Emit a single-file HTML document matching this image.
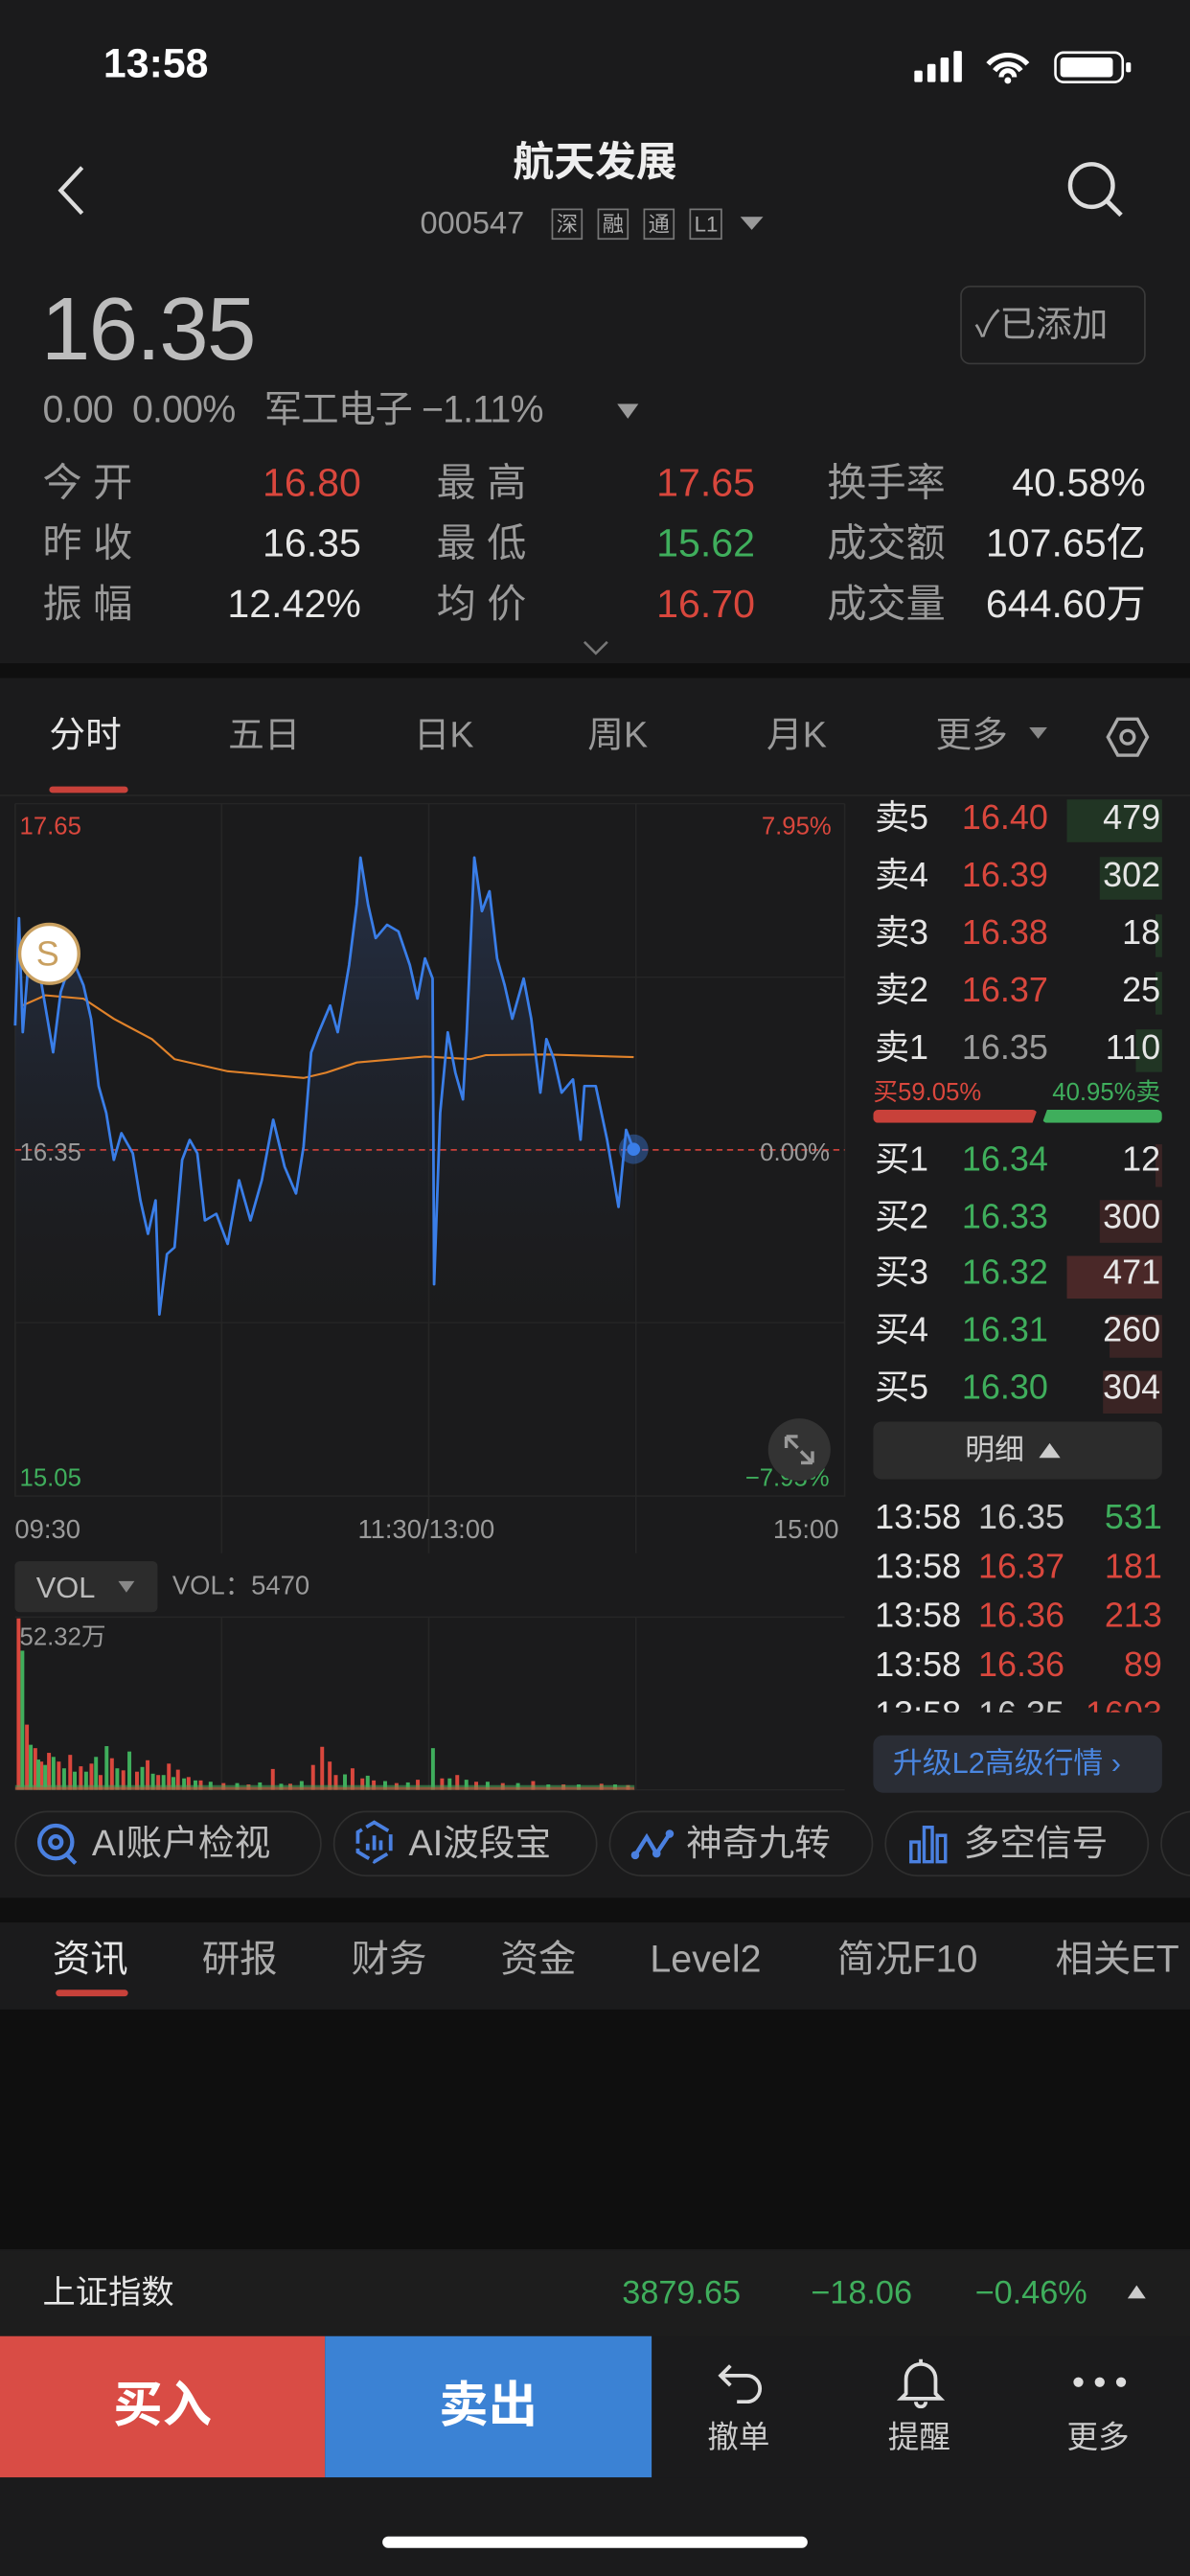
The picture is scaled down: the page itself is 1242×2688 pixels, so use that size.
<!DOCTYPE html>
<html><head><meta charset="utf-8">
<style>
*{margin:0;padding:0;box-sizing:border-box}
html,body{width:1242px;height:2688px;background:#1b1b1c;overflow:hidden}
#w{position:absolute;left:0;top:0;width:725px;height:1569px;transform:scale(1.71310);transform-origin:0 0;background:#1b1b1c;font-family:"Liberation Sans","Noto Sans CJK SC",sans-serif;color:#ddd}
.a{position:absolute;white-space:nowrap;line-height:1}
.g{color:#9a9a9a}.r{color:#d9473d}.gr{color:#3fae5c}.w{color:#e6e6e6}
.ob{position:absolute;height:26px}
.st{font-size:24px}
</style></head><body><div id="w">
<!-- status -->
<div class="a" style="left:63px;top:27px;font-size:25px;font-weight:bold;color:#fff">13:58</div>
<svg class="a" style="left:557px;top:30px" width="135" height="22"><rect x="0" y="13" width="5" height="7" rx="1" fill="#fff"/><rect x="8" y="9" width="5" height="11" rx="1" fill="#fff"/><rect x="16" y="5" width="5" height="15" rx="1" fill="#fff"/><rect x="24" y="1" width="5" height="19" rx="1" fill="#fff"/>
<path d="M45 9a16 16 0 0 1 24 0M49 13a10 10 0 0 1 16 0M53 17a4 4 0 0 1 8 0" stroke="#fff" stroke-width="3" fill="none"/><circle cx="57" cy="19" r="2" fill="#fff"/>
<rect x="86" y="2" width="41" height="18" rx="5" stroke="#fff" stroke-width="1.5" fill="none"/><rect x="89" y="5" width="32" height="12" rx="2" fill="#fff"/><rect x="129" y="8" width="3" height="6" rx="1" fill="#fff"/></svg>
<!-- nav -->
<svg class="a" style="left:33px;top:100px" width="20" height="32"><path d="M17 2L4 16l13 14" stroke="#ddd" stroke-width="2.5" fill="none"/></svg>
<div class="a" style="left:0;width:725px;text-align:center;top:87px;font-size:25px;font-weight:bold;color:#eee">航天发展</div>
<div class="a g" style="left:256px;top:127px;font-size:19px">000547</div>
<div class="a" style="left:336px;top:127px;font-size:13px;color:#aaa;border:1px solid #777;padding:2px 2px">深</div>
<div class="a" style="left:364px;top:127px;font-size:13px;color:#aaa;border:1px solid #777;padding:2px 2px">融</div>
<div class="a" style="left:392px;top:127px;font-size:13px;color:#aaa;border:1px solid #777;padding:2px 2px">通</div>
<div class="a" style="left:420px;top:127px;font-size:13px;color:#aaa;border:1px solid #777;padding:2px 2px">L1</div>
<svg class="a" style="left:451px;top:132px" width="15" height="10"><path d="M0 0h14L7 8z" fill="#999"/></svg>
<svg class="a" style="left:648px;top:96px" width="40" height="40"><circle cx="17" cy="17" r="13" stroke="#ddd" stroke-width="2.6" fill="none"/><path d="M26 26l9 9" stroke="#ddd" stroke-width="2.8"/></svg>
<!-- price -->
<div class="a" style="left:25px;top:174px;font-size:54px;color:#bdbdbd;letter-spacing:-1px">16.35</div>
<div class="a" style="left:585px;top:174px;width:113px;height:48px;border:1.5px solid #3a3a3a;border-radius:6px"></div>
<div class="a g" style="left:594px;top:187px;font-size:22px">✓已添加</div>
<div class="a g" style="left:26px;top:238px;font-size:23px;letter-spacing:-0.5px">0.00&nbsp; 0.00%&nbsp;&nbsp; 军工电子 −1.11%</div>
<svg class="a" style="left:376px;top:246px" width="14" height="10"><path d="M0 0h13L6.5 9z" fill="#999"/></svg>
<!-- stats -->
<div class="st">
<div class="a g" style="left:26px;top:283px">今 开</div><div class="a r" style="left:0;width:220px;text-align:right;top:283px">16.80</div>
<div class="a g" style="left:266px;top:283px">最 高</div><div class="a r" style="left:0;width:460px;text-align:right;top:283px">17.65</div>
<div class="a g" style="left:504px;top:283px">换手率</div><div class="a w" style="left:0;width:698px;text-align:right;top:283px">40.58%</div>
<div class="a g" style="left:26px;top:320px">昨 收</div><div class="a w" style="left:0;width:220px;text-align:right;top:320px">16.35</div>
<div class="a g" style="left:266px;top:320px">最 低</div><div class="a gr" style="left:0;width:460px;text-align:right;top:320px">15.62</div>
<div class="a g" style="left:504px;top:320px">成交额</div><div class="a w" style="left:0;width:698px;text-align:right;top:320px">107.65亿</div>
<div class="a g" style="left:26px;top:357px">振 幅</div><div class="a w" style="left:0;width:220px;text-align:right;top:357px">12.42%</div>
<div class="a g" style="left:266px;top:357px">均 价</div><div class="a r" style="left:0;width:460px;text-align:right;top:357px">16.70</div>
<div class="a g" style="left:504px;top:357px">成交量</div><div class="a w" style="left:0;width:698px;text-align:right;top:357px">644.60万</div>
</div>
<svg class="a" style="left:355px;top:390px" width="16" height="10"><path d="M1 1l7 7 7-7" stroke="#777" stroke-width="1.5" fill="none"/></svg>
<div class="a" style="left:0;top:404px;width:725px;height:9px;background:#0f0f0f"></div>
<!-- tabs -->
<div style="font-size:22px">
<div class="a w" style="left:30px;top:437px">分时</div>
<div class="a g" style="left:139px;top:437px">五日</div>
<div class="a g" style="left:252px;top:437px">日K</div>
<div class="a g" style="left:358px;top:437px">周K</div>
<div class="a g" style="left:467px;top:437px">月K</div>
<div class="a g" style="left:570px;top:437px">更多</div>
</div>
<svg class="a" style="left:627px;top:443px" width="12" height="8"><path d="M0 0h11L5.5 7z" fill="#888"/></svg>
<svg class="a" style="left:673px;top:435px" width="28" height="28"><path d="M8 3h12l6 11-6 11H8L2 14z" stroke="#aaa" stroke-width="2" fill="none"/><circle cx="14" cy="14" r="4" stroke="#aaa" stroke-width="2" fill="none"/></svg>
<div class="a" style="left:30px;top:479px;width:48px;height:4px;background:#c8413a;border-radius:2px"></div>
<div class="a" style="left:0;top:484px;width:725px;height:1px;background:#262626"></div>
<!-- chart svg (zoom coords, non-uniform) -->
<svg class="a" style="left:0;top:465px" width="725" height="642" viewBox="0 0 1568 1568" preserveAspectRatio="none">
<defs><linearGradient id="fg" x1="0" y1="0" x2="0" y2="1"><stop offset="0" stop-color="#2a3a5a" stop-opacity=".7"/><stop offset="1" stop-color="#1b1b1c" stop-opacity=".2"/></linearGradient></defs>
<g stroke="#262626" stroke-width="2" fill="none" vector-effect="non-scaling-stroke"><path d="M20 60H1113M20 318H1113M20 832H1113M20 1090H1113M20 60V1090H1113V60M292 60V1175M565 60V1175M838 60V1175M20 1270H1113M565 1270V1527M838 1270V1527M292 1270V1527M20 1527H1113"/></g>
<polygon fill="url(#fg)" points="20,390 25,230 30,400 40,260 55,330 70,430 80,340 95,290 110,330 120,380 130,480 140,520 150,590 160,550 175,580 185,650 195,700 205,650 210,820 220,730 230,720 240,590 250,560 260,580 270,680 285,670 300,715 315,620 330,680 345,620 360,530 375,600 390,640 400,570 410,430 420,400 435,360 445,400 460,300 470,210 475,140 485,210 495,260 510,240 525,250 540,300 550,350 560,290 570,320 572,775 580,520 590,400 600,460 610,500 615,400 625,140 635,220 645,190 655,290 665,330 675,380 690,320 700,380 712,490 720,410 730,440 740,490 755,470 765,560 770,480 785,480 800,560 815,660 825,545 835,575 835,832 20,832"/>
<path d="M20 575H1113" stroke="#c8413a" stroke-width="2.5" stroke-dasharray="8 6"/>
<polyline fill="none" stroke="#e0822a" stroke-width="3" points="30,360 60,345 110,350 150,380 200,410 230,440 300,458 400,468 430,460 470,445 560,436 620,440 640,434 720,433 835,437"/>
<polyline fill="none" stroke="#3a7ee8" stroke-width="3.5" stroke-linejoin="round" points="20,390 25,230 30,400 40,260 55,330 70,430 80,340 95,290 110,330 120,380 130,480 140,520 150,590 160,550 175,580 185,650 195,700 205,650 210,820 220,730 230,720 240,590 250,560 260,580 270,680 285,670 300,715 315,620 330,680 345,620 360,530 375,600 390,640 400,570 410,430 420,400 435,360 445,400 460,300 470,210 475,140 485,210 495,260 510,240 525,250 540,300 550,350 560,290 570,320 572,775 580,520 590,400 600,460 610,500 615,400 625,140 635,220 645,190 655,290 665,330 675,380 690,320 700,380 712,490 720,410 730,440 740,490 755,470 765,560 770,480 785,480 800,560 815,660 825,545 835,575"/>
<g fill="#d9473d">
<rect x="22" y="1272" width="5" height="255"/><rect x="33" y="1430" width="5" height="97"/><rect x="44" y="1465" width="5" height="62"/><rect x="52" y="1485" width="5" height="42"/><rect x="62" y="1472" width="5" height="55"/><rect x="75" y="1485" width="5" height="42"/><rect x="90" y="1475" width="5" height="52"/><rect x="104" y="1492" width="5" height="35"/><rect x="118" y="1488" width="5" height="39"/><rect x="130" y="1505" width="5" height="22"/><rect x="145" y="1480" width="5" height="47"/><rect x="160" y="1498" width="5" height="29"/><rect x="178" y="1500" width="5" height="27"/><rect x="192" y="1483" width="5" height="44"/><rect x="206" y="1505" width="5" height="22"/><rect x="220" y="1488" width="5" height="39"/><rect x="232" y="1497" width="5" height="30"/><rect x="246" y="1508" width="5" height="19"/><rect x="262" y="1513" width="5" height="14"/><rect x="292" y="1517" width="5" height="10"/><rect x="325" y="1519" width="5" height="8"/><rect x="357" y="1496" width="5" height="31"/><rect x="380" y="1518" width="5" height="9"/><rect x="410" y="1490" width="5" height="37"/><rect x="422" y="1463" width="5" height="64"/><rect x="432" y="1485" width="5" height="42"/><rect x="440" y="1505" width="5" height="22"/><rect x="462" y="1495" width="5" height="32"/><rect x="475" y="1510" width="5" height="17"/><rect x="490" y="1513" width="5" height="14"/><rect x="520" y="1517" width="5" height="10"/><rect x="548" y="1512" width="5" height="15"/><rect x="580" y="1510" width="5" height="17"/><rect x="600" y="1505" width="5" height="22"/><rect x="625" y="1515" width="5" height="12"/><rect x="660" y="1517" width="5" height="10"/><rect x="700" y="1514" width="5" height="13"/><rect x="740" y="1519" width="5" height="8"/><rect x="790" y="1518" width="5" height="9"/><rect x="825" y="1520" width="5" height="7"/></g>
<g fill="#3fae5c">
<rect x="27" y="1320" width="5" height="207"/><rect x="38" y="1460" width="5" height="67"/><rect x="48" y="1482" width="5" height="45"/><rect x="57" y="1490" width="5" height="37"/><rect x="68" y="1478" width="5" height="49"/><rect x="82" y="1495" width="5" height="32"/><rect x="96" y="1500" width="5" height="27"/><rect x="111" y="1500" width="5" height="27"/><rect x="124" y="1478" width="5" height="49"/><rect x="138" y="1462" width="5" height="65"/><rect x="152" y="1495" width="5" height="32"/><rect x="168" y="1470" width="5" height="57"/><rect x="185" y="1493" width="5" height="34"/><rect x="199" y="1503" width="5" height="24"/><rect x="213" y="1505" width="5" height="22"/><rect x="226" y="1508" width="5" height="19"/><rect x="240" y="1510" width="5" height="17"/><rect x="255" y="1513" width="5" height="14"/><rect x="275" y="1515" width="5" height="12"/><rect x="310" y="1517" width="5" height="10"/><rect x="340" y="1516" width="5" height="11"/><rect x="368" y="1518" width="5" height="9"/><rect x="395" y="1514" width="5" height="13"/><rect x="452" y="1504" width="5" height="23"/><rect x="482" y="1506" width="5" height="21"/><rect x="505" y="1514" width="5" height="13"/><rect x="535" y="1516" width="5" height="11"/><rect x="568" y="1465" width="5" height="62"/><rect x="590" y="1510" width="5" height="17"/><rect x="612" y="1512" width="5" height="15"/><rect x="640" y="1515" width="5" height="12"/><rect x="680" y="1517" width="5" height="10"/><rect x="720" y="1519" width="5" height="8"/><rect x="760" y="1519" width="5" height="8"/><rect x="808" y="1519" width="5" height="8"/></g>
<rect x="20" y="1520" width="816" height="7" fill="#3fae5c" opacity=".55"/>
<rect x="20" y="1523" width="816" height="4" fill="#d9473d" opacity=".55"/>
</svg>
<!-- chart overlays -->
<div class="a r" style="left:12px;top:496px;font-size:15px">17.65</div>
<div class="a r" style="left:464px;top:496px;font-size:15px">7.95%</div>
<div class="a g" style="left:12px;top:695px;font-size:15px">16.35</div>
<div class="a g" style="left:463px;top:695px;font-size:15px">0.00%</div>
<div class="a gr" style="left:12px;top:893px;font-size:15px">15.05</div>
<div class="a gr" style="left:454px;top:893px;font-size:15px">−7.95%</div>
<div class="a g" style="left:9px;top:925px;font-size:16px">09:30</div>
<div class="a g" style="left:218px;top:925px;font-size:16px">11:30/13:00</div>
<div class="a g" style="left:471px;top:925px;font-size:16px">15:00</div>
<div class="a" style="left:9px;top:951px;width:87px;height:31px;background:#2c2c2c;border-radius:3px"></div>
<div class="a" style="left:22px;top:958px;font-size:18px;color:#bbb">VOL</div>
<svg class="a" style="left:72px;top:963px" width="10" height="8"><path d="M0 0h10L5 7z" fill="#888"/></svg>
<div class="a g" style="left:105px;top:959px;font-size:16px">VOL：5470</div>
<div class="a g" style="left:12px;top:990px;font-size:15px">52.32万</div>
<div class="a" style="left:11px;top:562px;width:38px;height:38px;border-radius:50%;background:#fff;border:2px solid #c9a060"></div>
<div class="a" style="left:22px;top:571px;font-size:21px;color:#c9a060">S</div>
<div class="a" style="left:377px;top:691px;width:18px;height:18px;border-radius:50%;background:rgba(58,126,232,.4)"></div>
<div class="a" style="left:382px;top:696px;width:8px;height:8px;border-radius:50%;background:#3a7ee8"></div>
<div class="a" style="left:468px;top:864px;width:38px;height:38px;border-radius:50%;background:#333"></div>
<svg class="a" style="left:476px;top:872px" width="22" height="22"><path d="M3 3l7 7M3 3v7M3 3h7M19 19l-7-7M19 19v-7M19 19h-7" stroke="#999" stroke-width="2"/></svg>
<!-- order book -->
<div style="position:absolute;left:532px;top:485px;width:176px;font-size:20px">
<div class="ob" style="left:118px;top:2px;width:58px;background:#213524"></div>
<div class="ob" style="left:138px;top:37px;width:38px;background:#213524"></div>
<div class="ob" style="left:172px;top:72px;width:4px;background:#213524"></div>
<div class="ob" style="left:172px;top:107px;width:4px;background:#213524"></div>
<div class="ob" style="left:160px;top:142px;width:16px;background:#213524"></div>
<div class="ob" style="left:172px;top:212px;width:4px;background:#3a2424"></div>
<div class="ob" style="left:138px;top:246px;width:38px;background:#3a2424"></div>
<div class="ob" style="left:118px;top:280px;width:58px;background:#4a2828"></div>
<div class="ob" style="left:144px;top:316px;width:32px;background:#3a2424"></div>
<div class="ob" style="left:140px;top:350px;width:36px;background:#3a2424"></div>
</div>
<div style="font-size:21px">
<div class="a w" style="left:533px;top:488px">卖5</div><div class="a r" style="left:586px;top:488px">16.40</div><div class="a w" style="left:600px;width:107px;text-align:right;top:488px">479</div>
<div class="a w" style="left:533px;top:523px">卖4</div><div class="a r" style="left:586px;top:523px">16.39</div><div class="a w" style="left:600px;width:107px;text-align:right;top:523px">302</div>
<div class="a w" style="left:533px;top:558px">卖3</div><div class="a r" style="left:586px;top:558px">16.38</div><div class="a w" style="left:600px;width:107px;text-align:right;top:558px">18</div>
<div class="a w" style="left:533px;top:593px">卖2</div><div class="a r" style="left:586px;top:593px">16.37</div><div class="a w" style="left:600px;width:107px;text-align:right;top:593px">25</div>
<div class="a w" style="left:533px;top:628px">卖1</div><div class="a g" style="left:586px;top:628px">16.35</div><div class="a w" style="left:600px;width:107px;text-align:right;top:628px">110</div>
<div class="a r" style="left:532px;top:658px;font-size:15px">买59.05%</div><div class="a gr" style="left:600px;width:107px;text-align:right;top:658px;font-size:15px">40.95%卖</div>
<div class="a" style="left:532px;top:676px;width:100px;height:8px;background:#c8413a;border-radius:3px;clip-path:polygon(0 0,100% 0,97% 100%,0 100%)"></div>
<div class="a" style="left:635px;top:676px;width:73px;height:8px;background:#3fae5c;border-radius:3px;clip-path:polygon(4% 0,100% 0,100% 100%,0 100%)"></div>
<div class="a w" style="left:533px;top:696px">买1</div><div class="a gr" style="left:586px;top:696px">16.34</div><div class="a w" style="left:600px;width:107px;text-align:right;top:696px">12</div>
<div class="a w" style="left:533px;top:731px">买2</div><div class="a gr" style="left:586px;top:731px">16.33</div><div class="a w" style="left:600px;width:107px;text-align:right;top:731px">300</div>
<div class="a w" style="left:533px;top:765px">买3</div><div class="a gr" style="left:586px;top:765px">16.32</div><div class="a w" style="left:600px;width:107px;text-align:right;top:765px">471</div>
<div class="a w" style="left:533px;top:800px">买4</div><div class="a gr" style="left:586px;top:800px">16.31</div><div class="a w" style="left:600px;width:107px;text-align:right;top:800px">260</div>
<div class="a w" style="left:533px;top:835px">买5</div><div class="a gr" style="left:586px;top:835px">16.30</div><div class="a w" style="left:600px;width:107px;text-align:right;top:835px">304</div>
<div class="a" style="left:532px;top:866px;width:176px;height:35px;background:#2c2c2c;border-radius:5px"></div>
<div class="a" style="left:588px;top:874px;font-size:18px;color:#ccc">明细</div>
<svg class="a" style="left:633px;top:879px" width="14" height="10"><path d="M0 9h13L6.5 0z" fill="#ccc"/></svg>
<div style="position:absolute;left:532px;top:910px;width:176px;height:133px;overflow:hidden">
<div class="a w" style="left:1px;top:4px">13:58</div><div class="a" style="left:64px;top:4px;color:#ccc">16.35</div><div class="a gr" style="left:0;width:176px;text-align:right;top:4px">531</div>
<div class="a w" style="left:1px;top:34px">13:58</div><div class="a r" style="left:64px;top:34px">16.37</div><div class="a r" style="left:0;width:176px;text-align:right;top:34px">181</div>
<div class="a w" style="left:1px;top:64px">13:58</div><div class="a r" style="left:64px;top:64px">16.36</div><div class="a r" style="left:0;width:176px;text-align:right;top:64px">213</div>
<div class="a w" style="left:1px;top:94px">13:58</div><div class="a r" style="left:64px;top:94px">16.36</div><div class="a r" style="left:0;width:176px;text-align:right;top:94px">89</div>
<div class="a w" style="left:1px;top:124px">13:58</div><div class="a" style="left:64px;top:124px;color:#ccc">16.35</div><div class="a r" style="left:0;width:176px;text-align:right;top:124px">1603</div>
</div>
<div class="a" style="left:532px;top:1057px;width:176px;height:35px;background:#2a2d35;border-radius:6px"></div>
<div class="a" style="left:544px;top:1065px;font-size:18px;color:#4a86e0">升级L2高级行情 ›</div>
</div>
<!-- pills -->
<div style="font-size:22px;color:#bbb">
<div class="a" style="left:9px;top:1103px;width:187px;height:40px;border:1px solid #2f2f2f;border-radius:20px"></div>
<svg class="a" style="left:22px;top:1109px" width="26" height="28"><circle cx="12" cy="13" r="10" stroke="#4a80e0" stroke-width="2.5" fill="none"/><circle cx="12" cy="13" r="3.5" stroke="#4a80e0" stroke-width="2.5" fill="none"/><path d="M19 21l5 5" stroke="#4a80e0" stroke-width="2.5"/></svg>
<div class="a" style="left:56px;top:1112px">AI账户检视</div>
<div class="a" style="left:203px;top:1103px;width:161px;height:40px;border:1px solid #2f2f2f;border-radius:20px"></div>
<svg class="a" style="left:214px;top:1108px" width="28" height="30"><path d="M14 2l10 6v12l-10 6-10-6V8z" stroke="#4a80e0" stroke-width="2.2" fill="none" stroke-dasharray="10 3"/><path d="M10 19v-4M14 19v-9M18 19v-6" stroke="#4a80e0" stroke-width="2.2"/></svg>
<div class="a" style="left:249px;top:1112px">AI波段宝</div>
<div class="a" style="left:371px;top:1103px;width:161px;height:40px;border:1px solid #2f2f2f;border-radius:20px"></div>
<svg class="a" style="left:384px;top:1112px" width="28" height="24"><path d="M3 18l7-11 6 10 8-12" stroke="#4a80e0" stroke-width="2.5" fill="none"/><circle cx="3" cy="18" r="2.5" fill="#4a80e0"/><circle cx="16" cy="17" r="2.5" fill="#4a80e0"/><circle cx="24" cy="5" r="2.5" fill="#4a80e0"/></svg>
<div class="a" style="left:418px;top:1112px">神奇九转</div>
<div class="a" style="left:539px;top:1103px;width:161px;height:40px;border:1px solid #2f2f2f;border-radius:20px"></div>
<svg class="a" style="left:553px;top:1110px" width="26" height="26"><path d="M2 12h5v12H2zM10 3h5v21h-5zM18 8h5v16h-5z" stroke="#4a80e0" stroke-width="2" fill="none"/></svg>
<div class="a" style="left:587px;top:1112px">多空信号</div>
<div class="a" style="left:707px;top:1103px;width:40px;height:40px;border:1px solid #2f2f2f;border-radius:20px"></div>
</div>
<div class="a" style="left:0;top:1156px;width:725px;height:15px;background:#0f0f0f"></div>
<!-- lower tabs -->
<div style="font-size:23px;color:#aaa">
<div class="a w" style="left:32px;top:1182px">资讯</div><div class="a" style="left:123px;top:1182px">研报</div><div class="a" style="left:214px;top:1182px">财务</div><div class="a" style="left:305px;top:1182px">资金</div><div class="a" style="left:396px;top:1182px">Level2</div><div class="a" style="left:510px;top:1182px">简况F10</div><div class="a" style="left:643px;top:1182px">相关ET</div>
</div>
<div class="a" style="left:34px;top:1212px;width:44px;height:4px;background:#c8413a;border-radius:2px"></div>
<div class="a" style="left:0;top:1224px;width:725px;height:146px;background:#0f0f0f"></div>
<!-- index bar -->
<div class="a" style="left:0;top:1371px;width:725px;height:52px;background:#1d1d1d"></div>
<div class="a w" style="left:26px;top:1387px;font-size:20px">上证指数</div>
<div class="a gr" style="left:379px;top:1387px;font-size:20px">3879.65</div>
<div class="a gr" style="left:494px;top:1387px;font-size:20px">−18.06</div>
<div class="a gr" style="left:594px;top:1387px;font-size:20px">−0.46%</div>
<svg class="a" style="left:687px;top:1392px" width="12" height="9"><path d="M0 8h11L5.5 0z" fill="#ccc"/></svg>
<!-- toolbar -->
<div class="a" style="left:0;top:1423px;width:725px;height:86px;background:#1b1b1c"></div>
<div class="a" style="left:0;top:1423px;width:198px;height:86px;background:#d94c45"></div>
<div class="a" style="left:198px;top:1423px;width:199px;height:86px;background:#3b82d4"></div>
<div class="a" style="left:0;width:198px;text-align:center;top:1451px;font-size:30px;font-weight:bold;color:#fff">买入</div>
<div class="a" style="left:198px;width:199px;text-align:center;top:1451px;font-size:30px;font-weight:bold;color:#fff">卖出</div>
<svg class="a" style="left:437px;top:1438px" width="30" height="26"><path d="M8 3L2 9l6 6M2 9h16a8 8 0 0 1 0 16h-6" stroke="#ddd" stroke-width="2.2" fill="none"/></svg>
<div class="a" style="left:431px;top:1476px;font-size:19px;color:#ccc">撤单</div>
<svg class="a" style="left:546px;top:1435px" width="30" height="32"><path d="M6 23V14a9 9 0 0 1 18 0v9l3 3H3zM12 28a3 3 0 0 0 6 0M15 2v3" stroke="#ddd" stroke-width="2.2" fill="none"/></svg>
<div class="a" style="left:541px;top:1476px;font-size:19px;color:#ccc">提醒</div>
<svg class="a" style="left:653px;top:1446px" width="36" height="10"><circle cx="4" cy="5" r="3" fill="#ddd"/><circle cx="17" cy="5" r="3" fill="#ddd"/><circle cx="30" cy="5" r="3" fill="#ddd"/></svg>
<div class="a" style="left:650px;top:1476px;font-size:19px;color:#ccc">更多</div>
<div class="a" style="left:233px;top:1545px;width:259px;height:7px;background:#fff;border-radius:4px"></div>
</div></body></html>
